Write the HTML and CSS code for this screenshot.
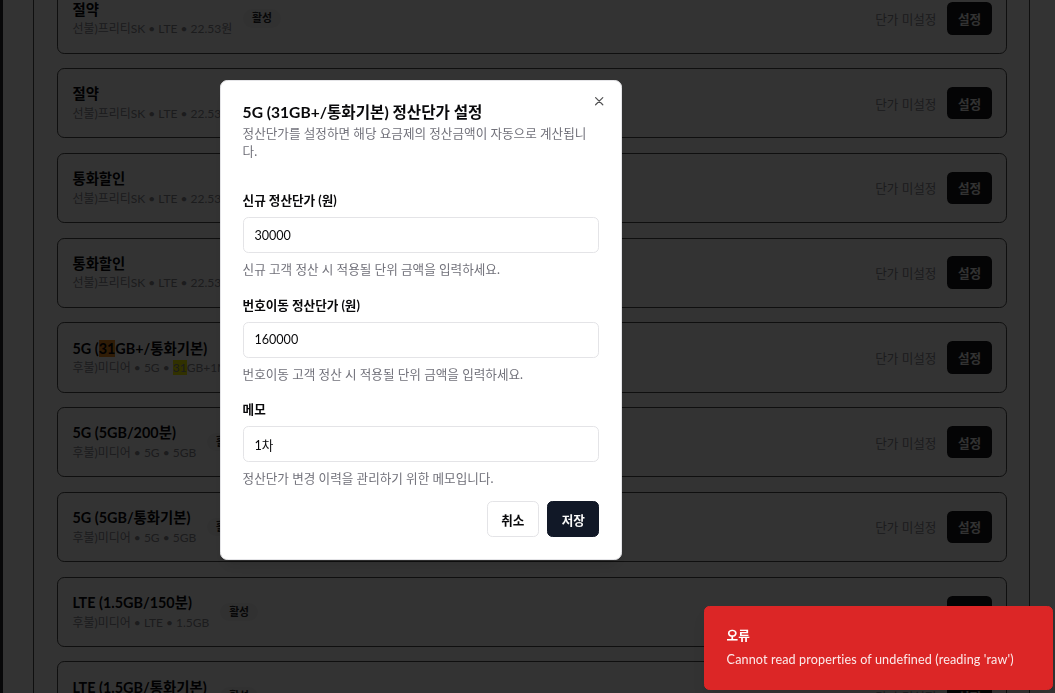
FILE: index.html
```html
<!DOCTYPE html>
<html lang="ko">
<head>
<meta charset="utf-8">
<title>요금제 정산단가 설정</title>
<link rel="stylesheet" href="styles.css">
</head>
<body>
<div class="app">
  <aside class="sidebar"></aside>
  <main class="main">
    <section class="panel">
      <ul class="plan-list">
        <li class="plan">
          <div class="plan-main">
            <div class="plan-text">
              <div class="plan-name">절약</div>
              <div class="plan-meta">선불)프리티SK • LTE • 22.53원</div>
            </div>
            <span class="badge">활성</span>
          </div>
          <div class="plan-side"><span class="price-status">단가 미설정</span><button class="btn-set">설정</button></div>
        </li>
        <li class="plan">
          <div class="plan-main">
            <div class="plan-text">
              <div class="plan-name">절약</div>
              <div class="plan-meta">선불)프리티SK • LTE • 22.53원</div>
            </div>
            <span class="badge">활성</span>
          </div>
          <div class="plan-side"><span class="price-status">단가 미설정</span><button class="btn-set">설정</button></div>
        </li>
        <li class="plan">
          <div class="plan-main">
            <div class="plan-text">
              <div class="plan-name">통화할인</div>
              <div class="plan-meta">선불)프리티SK • LTE • 22.53원</div>
            </div>
            <span class="badge">활성</span>
          </div>
          <div class="plan-side"><span class="price-status">단가 미설정</span><button class="btn-set">설정</button></div>
        </li>
        <li class="plan">
          <div class="plan-main">
            <div class="plan-text">
              <div class="plan-name">통화할인</div>
              <div class="plan-meta">선불)프리티SK • LTE • 22.53원</div>
            </div>
            <span class="badge">활성</span>
          </div>
          <div class="plan-side"><span class="price-status">단가 미설정</span><button class="btn-set">설정</button></div>
        </li>
        <li class="plan">
          <div class="plan-main">
            <div class="plan-text">
              <div class="plan-name">5G (<mark class="hl-orange">31</mark>GB+/통화기본)</div>
              <div class="plan-meta">후불)미디어 • 5G • <mark class="hl-yellow">31</mark>GB+1Mbps</div>
            </div>
            <span class="badge">활성</span>
          </div>
          <div class="plan-side"><span class="price-status">단가 미설정</span><button class="btn-set">설정</button></div>
        </li>
        <li class="plan">
          <div class="plan-main">
            <div class="plan-text">
              <div class="plan-name">5G (5GB/200분)</div>
              <div class="plan-meta">후불)미디어 • 5G • 5GB</div>
            </div>
            <span class="badge">활성</span>
          </div>
          <div class="plan-side"><span class="price-status">단가 미설정</span><button class="btn-set">설정</button></div>
        </li>
        <li class="plan">
          <div class="plan-main">
            <div class="plan-text">
              <div class="plan-name">5G (5GB/통화기본)</div>
              <div class="plan-meta">후불)미디어 • 5G • 5GB</div>
            </div>
            <span class="badge">활성</span>
          </div>
          <div class="plan-side"><span class="price-status">단가 미설정</span><button class="btn-set">설정</button></div>
        </li>
        <li class="plan">
          <div class="plan-main">
            <div class="plan-text">
              <div class="plan-name">LTE (1.5GB/150분)</div>
              <div class="plan-meta">후불)미디어 • LTE • 1.5GB</div>
            </div>
            <span class="badge">활성</span>
          </div>
          <div class="plan-side"><span class="price-status">단가 미설정</span><button class="btn-set">설정</button></div>
        </li>
        <li class="plan">
          <div class="plan-main">
            <div class="plan-text">
              <div class="plan-name">LTE (1.5GB/통화기본)</div>
              <div class="plan-meta">후불)미디어 • LTE • 1.5GB</div>
            </div>
            <span class="badge">활성</span>
          </div>
          <div class="plan-side"><span class="price-status">단가 미설정</span><button class="btn-set">설정</button></div>
        </li>
      </ul>
    </section>
  </main>
</div>

<div class="overlay"></div>

<div class="dialog" role="dialog" aria-labelledby="dlg-title">
  <button class="dialog-close" aria-label="닫기">
    <svg viewBox="0 0 24 24" fill="none" stroke="currentColor" stroke-width="2" stroke-linecap="round" stroke-linejoin="round"><path d="M18 6 6 18M6 6l12 12"/></svg>
  </button>
  <div class="dialog-header">
    <h2 class="dialog-title" id="dlg-title">5G (31GB+/통화기본) 정산단가 설정</h2>
    <p class="dialog-desc">정산단가를 설정하면 해당 요금제의 정산금액이 자동으로 계산됩니다.</p>
  </div>
  <form class="dialog-form">
    <div class="field">
      <label class="field-label" for="f-new">신규 정산단가 (원)</label>
      <input class="field-input" id="f-new" value="30000">
      <p class="field-help">신규 고객 정산 시 적용될 단위 금액을 입력하세요.</p>
    </div>
    <div class="field">
      <label class="field-label" for="f-mnp">번호이동 정산단가 (원)</label>
      <input class="field-input" id="f-mnp" value="160000">
      <p class="field-help">번호이동 고객 정산 시 적용될 단위 금액을 입력하세요.</p>
    </div>
    <div class="field">
      <label class="field-label" for="f-memo">메모</label>
      <input class="field-input" id="f-memo" value="1차">
      <p class="field-help">정산단가 변경 이력을 관리하기 위한 메모입니다.</p>
    </div>
    <div class="dialog-footer">
      <button type="button" class="btn btn-outline">취소</button>
      <button type="button" class="btn btn-primary">저장</button>
    </div>
  </form>
</div>

<div class="toast" role="alert">
  <div class="toast-title">오류</div>
  <div class="toast-desc">Cannot read properties of undefined (reading 'raw')</div>
</div>
</body>
</html>
```

FILE: styles.css
```css
* { box-sizing: border-box; }

html, body {
  margin: 0;
  padding: 0;
}

body {
  width: 1055px;
  height: 693px;
  overflow: hidden;
  position: relative;
  background: #ffffff;
  color: #09090b;
  font-family: Lato, "Noto Sans CJK KR", sans-serif;
}

/* ---------- page underneath ---------- */
.app {
  display: flex;
  height: 693px;
}

.sidebar {
  flex: none;
  width: 3px;
  background: #2a2a2e;
}

.main {
  flex: 1;
  padding: 0 25px 0 30px;
}

.panel {
  height: 100%;
  border-left: 1px solid #4a4a4a;
  border-right: 1px solid #4a4a4a;
  padding: 0 22px 0 23px;
  overflow: hidden;
}

.plan-list {
  list-style: none;
  margin: -16.8px 0 0;
  padding: 0;
  display: flex;
  flex-direction: column;
  gap: 14.4px;
}

.plan {
  display: flex;
  align-items: center;
  justify-content: space-between;
  border: 1px solid #4a4a4a;
  border-radius: 7.2px;
  padding: 14.4px 14px 14.4px 14.4px;
}

.plan-main {
  display: flex;
  align-items: center;
  gap: 10.8px;
}

.plan-name {
  font-size: 14.4px;
  line-height: 21.6px;
  font-weight: 700;
  color: #09090b;
}

.plan-meta {
  font-size: 12px;
  line-height: 18px;
  color: #8a8a92;
}

mark {
  color: inherit;
  padding: 0;
}

.hl-orange { background: #f08a1e; }
.hl-yellow { background: #f2f200; }

.badge {
  font-size: 10.8px;
  line-height: 14.4px;
  font-weight: 700;
  padding: 2px 9px;
  border-radius: 999px;
  background: #f4f4f5;
  color: #27272a;
}

.plan-side {
  display: flex;
  align-items: center;
  gap: 10.8px;
}

.price-status {
  font-size: 12.6px;
  color: #8a8a92;
}

.btn-set {
  height: 32.4px;
  padding: 0 10.8px;
  border: 0;
  border-radius: 5.4px;
  background: #18181b;
  color: #fafafa;
  font-family: inherit;
  font-size: 12.6px;
  font-weight: 700;
}

/* ---------- overlay ---------- */
.overlay {
  position: fixed;
  inset: 0;
  background: rgba(0, 0, 0, 0.8);
}

/* ---------- dialog ---------- */
.dialog {
  position: fixed;
  left: 220px;
  top: 80px;
  width: 402px;
  background: #ffffff;
  border: 1px solid #e4e4e7;
  border-radius: 7.2px;
  padding: 21.6px;
  box-shadow: 0 10px 15px -3px rgba(0,0,0,.1), 0 4px 6px -4px rgba(0,0,0,.1);
}

.dialog-close {
  position: absolute;
  right: 14.4px;
  top: 13.4px;
  width: 14.4px;
  height: 14.4px;
  padding: 0;
  border: 0;
  background: none;
  color: #09090b;
  opacity: 0.7;
  display: flex;
}

.dialog-close svg {
  width: 14.4px;
  height: 14.4px;
}

.dialog-title {
  margin: 0;
  font-size: 15.6px;
  line-height: 19px;
  font-weight: 700;
  color: #09090b;
}

.dialog-desc {
  margin: 3.4px 0 0;
  font-size: 12.6px;
  line-height: 18px;
  color: #71717a;
}

.dialog-form {
  margin: 31px 0 0;
  display: flex;
  flex-direction: column;
  gap: 17.6px;
}

.field {
  display: flex;
  flex-direction: column;
}

.field-label {
  font-size: 12.6px;
  line-height: 18px;
  font-weight: 700;
  color: #09090b;
}

.field-input {
  margin-top: 7.2px;
  height: 36px;
  width: 100%;
  border: 1px solid #e4e4e7;
  border-radius: 5.4px;
  padding: 0 10.8px;
  font-family: inherit;
  font-size: 12.6px;
  color: #09090b;
  background: #ffffff;
  outline: none;
}

.field-help {
  margin: 7.8px 0 0;
  font-size: 12.6px;
  line-height: 18px;
  color: #71717a;
}

.dialog-footer {
  display: flex;
  justify-content: flex-end;
  gap: 8px;
  margin-top: -4.6px;
}

.btn {
  height: 36px;
  padding: 0 13.6px;
  border-radius: 5.4px;
  font-family: inherit;
  font-size: 12.6px;
  font-weight: 700;
}

.btn-outline {
  background: #ffffff;
  border: 1px solid #e4e4e7;
  color: #09090b;
}

.btn-primary {
  background: #111827;
  border: 1px solid #111827;
  color: #fafafa;
}

/* ---------- toast ---------- */
.toast {
  position: fixed;
  right: 2px;
  bottom: 3px;
  width: 349px;
  background: #dc2626;
  color: #ffffff;
  border: 1px solid #dc2626;
  border-radius: 5.4px;
  padding: 20px 21.6px 20px;
  box-shadow: 0 10px 15px -3px rgba(0,0,0,.1);
}

.toast-title {
  font-size: 12.6px;
  line-height: 18px;
  font-weight: 700;
}

.toast-desc {
  margin-top: 5.6px;
  font-size: 12.6px;
  line-height: 18px;
  letter-spacing: 0.01em;
  opacity: 0.9;
}
```
